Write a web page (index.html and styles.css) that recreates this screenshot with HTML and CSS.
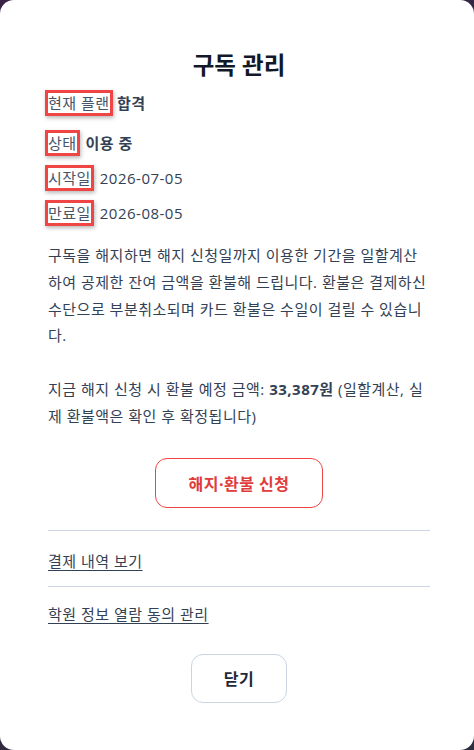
FILE: index.html
```html
<!DOCTYPE html>
<html lang="ko">
<head>
<meta charset="utf-8">
<title>구독 관리</title>
<link rel="stylesheet" href="styles.css">
</head>
<body>
<div class="card">
  <h2 class="title">구독 관리</h2>
  <div class="info">
    <p class="row row-plan"><span class="label marked">현재 플랜</span> <b>합격</b></p>
    <p class="row"><span class="label marked">상태</span>: <b>이용 중</b></p>
    <p class="row"><span class="label marked">시작일</span>: 2026-07-05</p>
    <p class="row"><span class="label marked">만료일</span>: 2026-08-05</p>
  </div>
  <p class="notice">구독을 해지하면 해지 신청일까지 이용한 기간을 일할계산하여 공제한 잔여 금액을 환불해 드립니다. 환불은 결제하신 수단으로 부분취소되며 카드 환불은 수일이 걸릴 수 있습니다.</p>
  <p class="notice refund">지금 해지 신청 시 환불 예정 금액: <b>33,387원</b> (일할계산, 실제 환불액은 확인 후 확정됩니다)</p>
  <div class="actions cancel-wrap">
    <button class="btn btn-danger" type="button">해지·환불 신청</button>
  </div>
  <ul class="links">
    <li><a href="#">결제 내역 보기</a></li>
    <li><a href="#">학원 정보 열람 동의 관리</a></li>
  </ul>
  <div class="actions close-wrap">
    <button class="btn btn-close" type="button">닫기</button>
  </div>
</div>
</body>
</html>
```

FILE: styles.css
```css
html, body {
  margin: 0;
  height: 100%;
}
body {
  background: linear-gradient(135deg, #3a2244 0%, #2b2f3f 100%);
  font-family: "Open Sans", "Noto Sans CJK KR", sans-serif;
  color: #334155;
  overflow: hidden;
}
.card {
  box-sizing: border-box;
  width: 474px;
  height: 750px;
  background: #fff;
  border-radius: 14px;
  padding: 49px 44px 0 48px;
}
.title {
  margin: 0 0 9px;
  text-align: center;
  font-size: 23.5px;
  line-height: 32px;
  font-weight: 700;
  color: #111827;
}
.info {
  display: flex;
  flex-direction: column;
  gap: 9px;
}
.row {
  margin: 0;
  font-size: 15px;
  line-height: 26px;
  letter-spacing: 0.5px;
}
.row-plan {
  margin-bottom: 5px;
}
.row-plan b {
  margin-left: 3px;
}
.row b {
  font-weight: 700;
  color: #334155;
}
.label {
  color: #475569;
}
.marked {
  position: relative;
}
.marked::after {
  content: "";
  position: absolute;
  left: -3px;
  right: -3px;
  top: -3px;
  bottom: -3px;
  border: 3px solid #f04545;
  box-shadow: 1px 2px 4px rgba(0, 0, 0, 0.28);
  pointer-events: none;
}
.notice {
  margin: 16px 0 0;
  font-size: 15px;
  line-height: 26.8px;
  letter-spacing: 0.5px;
  color: #334155;
}
.refund {
  margin-top: 26.8px;
}
.refund b {
  font-weight: 700;
}
.actions {
  display: flex;
  justify-content: center;
}
.cancel-wrap {
  margin-top: 28px;
}
.btn {
  font-family: "Open Sans", "Noto Sans CJK KR", sans-serif;
  font-size: 16px;
  font-weight: 700;
  letter-spacing: 0.5px;
  background: #fff;
  border-radius: 12px;
  cursor: pointer;
}
.btn-danger {
  width: 168px;
  height: 50px;
  border: 1px solid #ef4444;
  color: #e03c3c;
}
.links {
  list-style: none;
  margin: 22px 0 0;
  padding: 0;
}
.links li {
  border-top: 1px solid #cbd5e1;
  padding: 18px 0 13px;
  font-size: 15px;
  line-height: 24px;
  letter-spacing: 0.5px;
}
.links li + li {
  padding-top: 15px;
  padding-bottom: 0;
}
.links a {
  color: #334155;
  text-decoration: underline;
  text-underline-offset: 3px;
}
.close-wrap {
  margin-top: 28px;
}
.btn-close {
  width: 96px;
  height: 49px;
  border: 1px solid #cbd5e1;
  color: #1e293b;
}
```
